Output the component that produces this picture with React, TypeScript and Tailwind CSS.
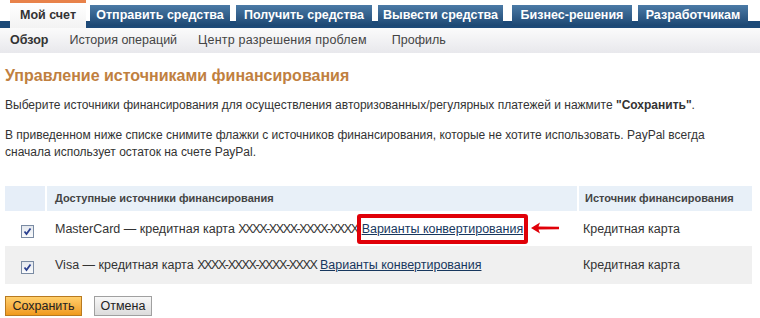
import React from "react";

const tabs = [
  { t: "Отправить средства", w: "w-[140px] ml-[4px]" },
  { t: "Получить средства", w: "w-[136px] ml-[6px]" },
  { t: "Вывести средства", w: "w-[125px] ml-[6px]" },
  { t: "Бизнес-решения", w: "w-[120px] ml-[9px]" },
  { t: "Разработчикам", w: "w-[110px] ml-[6px]" },
];
const subnav = [
  { t: "История операций", c: "" },
  { t: "Центр разрешения проблем", c: "tracking-[0.2px]" },
  { t: "Профиль", c: "ml-[4px]" },
];

const Checkbox = () => (
  <span className="inline-flex w-[13px] h-[13px] border border-[#7a8ba3] bg-gradient-to-b from-[#e4e8ee] to-[#fafbfc] items-center justify-center">
    <svg width="9" height="9" viewBox="0 0 9 9">
      <path d="M1.5 4.5 L3.5 7 L7.5 1.5" fill="none" stroke="#2a3f8f" strokeWidth="1.8" />
    </svg>
  </span>
);

export default function App() {
  return (
    <div className="w-[760px] h-[318px] bg-white overflow-hidden font-['Liberation_Sans',Arial,sans-serif] text-[#333]">
      {/* Tabs */}
      <div className="relative h-[28px]">
        <div className="absolute left-0 right-0 bottom-0 h-[7px] bg-[#1d4a78]" />
        <div className="relative flex items-end h-full pl-[10px]">
          <div className="w-[76px] h-[28px] shrink-0 bg-gradient-to-b from-[#fff] to-[#f3f3f3] border-t-[3px] border-[#e8824a] flex items-center justify-center text-[12.5px] font-bold text-[#333] pb-[1px] whitespace-nowrap">
            Мой счет
          </div>
          {tabs.map((x) => (
            <div
              key={x.t}
              className={`${x.w} shrink-0 h-[21px] bg-gradient-to-b from-[#4b7aa6] to-[#1c4772] text-white text-[12.5px] font-bold flex items-center justify-center mb-[2px] whitespace-nowrap`}
            >
              {x.t}
            </div>
          ))}
        </div>
      </div>
      {/* Sub nav */}
      <div className="h-[25px] bg-gradient-to-b from-[#fbfbfb] to-[#e8e8ec] flex items-center pl-[10px] gap-[21px] text-[12.5px] text-[#444]">
        <span className="font-bold text-[#333]">Обзор</span>
        {subnav.map((s) => (
          <span key={s.t} className={s.c}>{s.t}</span>
        ))}
      </div>

      <div className="px-[5px]">
        <h1 className="mt-[13px] text-[16px] font-bold text-[#c0803f] leading-[20px]">
          Управление источниками финансирования
        </h1>
        <p className="mt-[12px] text-[12px] leading-[15px]">
          Выберите источники финансирования для осуществления авторизованных/регулярных платежей и нажмите <b>"Сохранить"</b>.
        </p>
        <p className="mt-[14px] text-[12px] leading-[17px]">
          В приведенном ниже списке снимите флажки с источников финансирования, которые не хотите использовать. PayPal всегда
          <br />
          сначала использует остаток на счете PayPal.
        </p>

        <div className="mt-[25px] w-[747px] text-[12.5px]">
          <div className="flex h-[25px] gap-[2px] text-[11px] font-bold text-[#444]">
            <div className="w-[40px] bg-[#e6eef8]" />
            <div className="w-[530px] bg-[#e8f0f8] flex items-center pl-[8px]">Доступные источники финансирования</div>
            <div className="flex-1 bg-[#e8f0f8] flex items-center pl-[6px]">Источник финансирования</div>
          </div>
          <div className="flex h-[34px] items-center bg-white mt-[1px]">
            <div className="w-[42px] flex justify-center pt-[5px] pl-[2px]">
              <Checkbox />
            </div>
            <div className="w-[530px] flex items-center pl-[8px] whitespace-nowrap">
              <span>
                MasterCard — кредитная карта <span className="tracking-[-1.4px]">XXXX-XXXX-XXXX-XXXX</span>
              </span>
              <span className="relative ml-[4px]">
                <a className="underline text-[#17375e]">Варианты конвертирования</a>
                <span className="absolute -left-[5px] -right-[5px] -top-[6px] -bottom-[6px] border-[4px] border-[#e00008] rounded-[3px]" />
                <svg className="absolute left-[calc(100%+6px)] top-[0px]" width="32" height="16" viewBox="0 0 32 16">
                  <path d="M2 8 L11 2.5 L9.5 6.5 L30 6.8 L30 9.2 L9.5 9.5 L11 13.5 Z" fill="#e00008" />
                </svg>
              </span>
            </div>
            <div className="flex-1 pl-[6px]">Кредитная карта</div>
          </div>
          <div className="flex h-[38px] items-center bg-[#f0f0f0]">
            <div className="w-[42px] flex justify-center pt-[4px] pl-[2px]">
              <Checkbox />
            </div>
            <div className="w-[530px] pl-[8px] whitespace-nowrap">
              Visa — кредитная карта <span className="tracking-[-1.4px]">XXXX-XXXX-XXXX-XXXX</span>{" "}
              <a className="underline text-[#17375e]">Варианты конвертирования</a>
            </div>
            <div className="flex-1 pl-[6px]">Кредитная карта</div>
          </div>
        </div>

        <div className="mt-[12px] flex gap-[12px]">
          <button className="h-[20px] w-[77px] bg-gradient-to-b from-[#ffcf6a] to-[#f09a1a] border border-[#b87a20] text-[12.5px] text-[#222] leading-none">
            Сохранить
          </button>
          <button className="h-[20px] w-[58px] bg-gradient-to-b from-[#f8f8f8] to-[#dcdcdc] border border-[#a0a0a0] text-[12.5px] text-[#222] leading-none">
            Отмена
          </button>
        </div>
      </div>
    </div>
  );
}
